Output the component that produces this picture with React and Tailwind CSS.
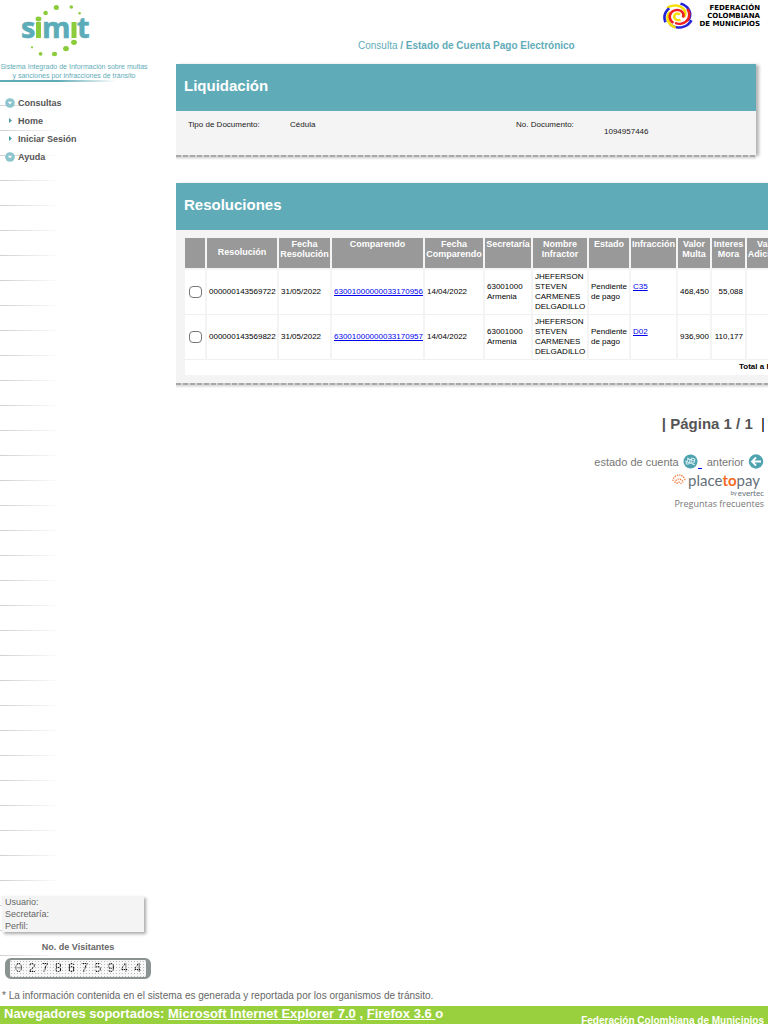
import React from "react";

const menuItems = [
  { label: "Consultas", group: true },
  { label: "Home" },
  { label: "Iniciar Sesión" },
  { label: "Ayuda", group: true },
];

const columns = [
  { label: "", width: "w-[21px]" },
  { label: "Resolución", width: "w-[72px]", middle: true },
  { label: "Fecha Resolución", width: "w-[53px]" },
  { label: "Comparendo", width: "w-[93px]" },
  { label: "Fecha Comparendo", width: "w-[60px]" },
  { label: "Secretaría", width: "w-[48px]" },
  { label: "Nombre Infractor", width: "w-[56px]" },
  { label: "Estado", width: "w-[42px]" },
  { label: "Infracción", width: "w-[47px]" },
  { label: "Valor Multa", width: "w-[34px]" },
  { label: "Interes Mora", width: "w-[35px]" },
  { label: "Valor Adicional", width: "w-[44px]" },
];

const rows = [
  {
    resolucion: "000000143569722",
    fecha: "31/05/2022",
    comparendo: "63001000000033170956",
    fechaComparendo: "14/04/2022",
    infraccion: "C35",
    multa: "468,450",
    mora: "55,088",
  },
  {
    resolucion: "000000143569822",
    fecha: "31/05/2022",
    comparendo: "63001000000033170957",
    fechaComparendo: "14/04/2022",
    infraccion: "D02",
    multa: "936,900",
    mora: "110,177",
  },
];

// swirl arms of the federation mark: start angle, sweep, outer and inner radius
const markArms = [
  { color: "#f5e000", start: -140, sweep: 150, from: 14, to: 6 },
  { color: "#2323d8", start: -80, sweep: 110, from: 14, to: 11 },
  { color: "#ee2020", start: -40, sweep: 150, from: 12, to: 8 },
  { color: "#2323d8", start: 20, sweep: 110, from: 14, to: 12 },
  { color: "#f5e000", start: 100, sweep: 110, from: 13, to: 9 },
  { color: "#2323d8", start: 150, sweep: 75, from: 14, to: 12 },
  { color: "#ee2020", start: 120, sweep: 260, from: 9, to: 5 },
  { color: "#f5e000", start: 60, sweep: 260, from: 5, to: 2 },
];

function armPoints({ start, sweep, from, to }) {
  const points = [];
  for (let i = 0; i <= 16; i++) {
    const angle = ((start + (sweep * i) / 16) * Math.PI) / 180;
    const r = from + ((to - from) * i) / 16;
    points.push(`${(r * Math.cos(angle)).toFixed(2)},${(r * Math.sin(angle)).toFixed(2)}`);
  }
  return points.join(" ");
}

function SimitLogo() {
  return (
    <svg width="76" height="54" viewBox="0 0 76 54" role="img" aria-label="simit">
      <g
        className="font-['Open_Sans','Noto_Sans',sans-serif] text-[29px] font-bold"
        fill="#5bacb8"
        stroke="#5bacb8"
        strokeWidth="0.600"
      >
        <text x="1" y="35">s</text>
        <text x="22" y="35">m</text>
        <text x="57" y="35">t</text>
      </g>
      <path fill="#8ccb3c" d="M16 19h5V35h-5zM51.500 19h5V35h-5z" />
      <g fill="#8ccb3c">
        <ellipse cx="18.500" cy="16" rx="2.900" ry="2.400" />
        <ellipse cx="25.600" cy="10" rx="2.300" ry="2.200" />
        <ellipse cx="36.300" cy="4.400" rx="2.600" ry="2.500" />
        <circle cx="51.300" cy="4" r="1.800" />
        <circle cx="59.600" cy="10.300" r="1.200" />
        <ellipse cx="54" cy="39.300" rx="2.900" ry="2.600" />
        <ellipse cx="46" cy="45.600" rx="2.900" ry="2.600" />
        <ellipse cx="34.500" cy="51" rx="2.600" ry="2.200" />
        <circle cx="20.600" cy="50.800" r="1.900" />
        <circle cx="12" cy="44.300" r="1.100" />
      </g>
    </svg>
  );
}

function FederationMark() {
  return (
    <svg width="32" height="28" viewBox="0 0 32 28" aria-hidden="true">
      <g transform="translate(16 14) scale(1.020 0.900)" fill="none">
        {markArms.map((arm, i) => (
          <polyline key={i} points={armPoints(arm)} stroke={arm.color} strokeWidth="2.600" />
        ))}
      </g>
    </svg>
  );
}

function GroupIcon() {
  return (
    <svg width="10" height="10" viewBox="0 0 10 10" aria-hidden="true">
      <circle cx="5" cy="5" r="4.800" fill="#8cc5cd" />
      <path d="M2.800 3.700H7.200L5 6.400Z" fill="#fff" />
    </svg>
  );
}

function Panel({ title, children, className = "" }) {
  return (
    <section className={className}>
      <div className="bg-[#f4f4f4] shadow-[3px_1px_3px_#b5b5b5]">
        <h2 className="flex h-[47px] items-center bg-[#5facb8] px-2 pb-[2px] text-[15px] font-bold text-white">
          {title}
        </h2>
        {children}
      </div>
      <div className="relative h-[2px] bg-[repeating-linear-gradient(90deg,#a8a8a8_0_5px,#d5d5d5_5px_7px)]" />
      <div className="relative h-[3px] bg-linear-to-b from-[#d5d5d5] to-white" />
    </section>
  );
}

function Sidebar() {
  return (
    <aside className="flex w-[152px] shrink-0 flex-col">
      <div className="flex flex-col bg-white">
        <div className="pt-[3px] pl-5">
          <SimitLogo />
        </div>
        <p className="mt-[5px] h-[18px] pr-1 text-center text-[7px] leading-[9px] whitespace-nowrap text-[#5facb8]">
          Sistema Integrado de Información sobre multas
          <br />y sanciones por infracciones de tránsito
        </p>
        <div className="h-[2px] w-[116px] bg-linear-to-r from-[#5facb8] from-50% to-white" />
      </div>
      <nav className="pt-[13px]">
        <ul>
          {menuItems.map((item) => (
            <li key={item.label} className="flex h-[18px] items-center">
              <span className="flex w-[18px] pb-[3px] pl-[5px]">
                {item.group ? (
                  <GroupIcon />
                ) : (
                  <svg width="10" height="8" viewBox="0 0 10 8" aria-hidden="true">
                    <path d="M4 1V6L7 3.500Z" fill="#4b9ca8" />
                  </svg>
                )}
              </span>
              <a href="#" className="text-[9px] font-bold text-[#555]">
                {item.label}
              </a>
            </li>
          ))}
        </ul>
      </nav>
      <div className="mt-auto w-[144px] pl-[2px]">
        <div className="bg-[#f4f4f4] pl-[3px] text-[9px] leading-[12px] text-[#666] shadow-[2px_2px_3px_#aaa]">
          <p>Usuario:</p>
          <p>Secretaría:</p>
          <p>Perfil:</p>
        </div>
      </div>
      <p className="mt-2 pl-1 text-center text-[9px] leading-[14px] font-bold text-[#666]">
        No. de Visitantes
      </p>
      <div className="mt-1 mb-px ml-[5px] flex h-[21px] w-[146px] items-center justify-around rounded-[6px] border-x-[5px] border-y-2 border-[#8a9292] bg-[#f8f8f8] bg-[radial-gradient(#bbb_1px,transparent_1px)] bg-size-[3px_3px] px-[2px] font-['Liberation_Mono',monospace] text-[13px]">
        {"0278675944".split("").map((digit, i) => (
          <span
            key={i}
            className="bg-[repeating-linear-gradient(90deg,#111_0_1px,#aaa_1px_2px)] bg-clip-text text-transparent"
          >
            {digit}
          </span>
        ))}
      </div>
    </aside>
  );
}

function ResolutionsTable() {
  return (
    <table className="w-[605px] table-fixed border-collapse text-[8px] leading-[10px] text-black">
      <thead>
        <tr className="h-[31px] bg-[#999]">
          {columns.map((col, i) => (
            <th
              key={i}
              className={`${col.width} border-r-2 border-b-2 border-[#f4f4f4] px-0 text-[9px] font-bold text-white ${
                col.middle ? "pb-[3px] align-middle" : "pt-px align-top"
              }`}
            >
              {col.label}
            </th>
          ))}
        </tr>
      </thead>
      <tbody>
        {rows.map((row) => (
          <tr
            key={row.resolucion}
            className="h-[45px] border-b border-[#f0f0f0] bg-white *:border-r-2 *:border-[#f4f4f4] *:p-[2px]"
          >
            <td className="text-center">
              <input
                type="checkbox"
                aria-label={`Seleccionar resolución ${row.resolucion}`}
                className="mx-auto block h-[12px] w-[13px] appearance-none rounded-[4px] border border-[#777] bg-white"
              />
            </td>
            <td>{row.resolucion}</td>
            <td>{row.fecha}</td>
            <td>
              <a href="#" className="text-[#0000ee] underline">
                {row.comparendo}
              </a>
            </td>
            <td>{row.fechaComparendo}</td>
            <td>63001000 Armenia</td>
            <td>JHEFERSON STEVEN CARMENES DELGADILLO</td>
            <td>Pendiente de pago</td>
            <td>
              <a href="#" className="block pb-[10px] text-[#0000ee] underline">
                {row.infraccion}
              </a>
            </td>
            <td className="text-right">{row.multa}</td>
            <td className="text-right">{row.mora}</td>
            <td />
          </tr>
        ))}
        <tr className="h-[15px] bg-white">
          <td colSpan={12} className="pl-[554px] font-bold whitespace-nowrap">
            Total a Pagar:
          </td>
        </tr>
      </tbody>
    </table>
  );
}

function PlaceToPay() {
  return (
    <a href="#" className="flex flex-col items-end pr-1" aria-label="placetopay by evertec">
      <span className="flex items-center gap-[2px] pr-1 font-['Lato',sans-serif] text-[15px] leading-[12px] text-[#66707a]">
        <svg width="14" height="12" viewBox="0 0 14 12" aria-hidden="true">
          <g fill="none" stroke="#f47b3c" strokeWidth="1.200" strokeDasharray="1.500 0.800">
            <path d="M1 7A6 6 0 0 1 13 7" />
            <path d="M3 9A4 4 0 1 1 11 9" />
            <path d="M5 10A2 2 0 1 1 9 10" />
          </g>
        </svg>
        <span>
          place<b className="text-[#f26a21]">to</b>pay
        </span>
      </span>
      <span className="mt-[3px] flex items-center gap-px font-['Lato',sans-serif] text-[8px] leading-[8px] text-[#66707a]">
        <small className="text-[6px]">by</small>evertec
      </span>
    </a>
  );
}

function Actions() {
  return (
    <div className="flex flex-col items-end text-[#777]">
      <p className="mt-[26px] pr-[3px] text-[15px] leading-[20px] font-bold whitespace-pre text-[#555]">
        | Página 1 / 1{"  "}
        <span className="font-normal text-black">|</span>
      </p>
      <div className="mt-5 flex items-center gap-[5px] pr-1 text-[11px] leading-[16px]">
        <a href="#" className="flex items-center">
          <span className="pr-1">estado de cuenta</span>
          <svg width="15" height="15" viewBox="0 0 15 15" aria-hidden="true">
            <circle cx="7.500" cy="7.500" r="7" fill="#4fa3b0" />
            <path
              d="M3 10L5 5L7 6L6 10ZM8 9L8.500 4L12 5L11 9ZM2 7L12 11M4 4L11 7"
              fill="none"
              stroke="#d8eef1"
              strokeWidth="1"
            />
          </svg>
          <span className="h-[15px] w-[4px] border-b border-[#0000ee]" />
        </a>
        <a href="#" className="flex items-center gap-1">
          anterior
          <svg width="16" height="15" viewBox="0 0 16 15" aria-hidden="true">
            <circle cx="8" cy="7.500" r="7.200" fill="#4fa3b0" />
            <path d="M13 7.500H4M8 3.500L4 7.500L8 11.500" fill="none" stroke="#fff" strokeWidth="1.800" />
          </svg>
        </a>
      </div>
      <div className="mt-1">
        <PlaceToPay />
      </div>
      <a href="#" className="pr-1 font-['Open_Sans','Noto_Sans',sans-serif] text-[9px] leading-[14px]">
        Preguntas frecuentes
      </a>
    </div>
  );
}

function App() {
  return (
    <div className="flex h-screen flex-col overflow-hidden bg-white font-['Liberation_Sans',Arial,sans-serif]">
      <div className="flex min-h-0 flex-1 bg-[linear-gradient(#d0d0d0_1px,transparent_1px)] bg-size-[100%_25px] bg-position-[0_5px]">
        <div className="flex min-w-0 flex-1 bg-linear-to-r from-transparent to-white to-[60px]">
          <Sidebar />
          <main className="min-w-0 flex-1 overflow-hidden pl-6">
            <header className="flex h-[64px] items-start justify-between">
              <p className="flex-1 self-end pb-3 pl-[182px] text-[10px] leading-[12px] font-bold whitespace-nowrap text-[#5facb8]">
                <span className="font-normal">Consulta</span> / Estado de Cuenta Pago Electrónico
              </p>
              <div className="flex shrink-0 items-start gap-[5px] pt-[2px] pr-2">
                <FederationMark />
                <p className="pt-[2px] text-right font-['DejaVu_Sans',sans-serif] text-[7px] leading-[8px] font-bold text-black">
                  FEDERACIÓN
                  <br />
                  COLOMBIANA
                  <br />
                  DE MUNICIPIOS
                </p>
              </div>
            </header>
            <Panel title="Liquidación" className="mr-3">
              <dl className="flex h-[44px] items-start pt-2 pl-3 text-[8px] leading-[12px] text-[#222]">
                <dt className="w-[102px]">Tipo de Documento:</dt>
                <dd className="w-[226px]">Cédula</dd>
                <dt className="w-[88px]">No. Documento:</dt>
                <dd className="pt-[7px]">1094957446</dd>
              </dl>
            </Panel>
            <Panel title="Resoluciones" className="mt-[23px] w-[640px]">
              <div className="pt-2 pb-2 pl-[9px]">
                <ResolutionsTable />
              </div>
            </Panel>
            <Actions />
          </main>
        </div>
      </div>
      <p className="h-[26px] shrink-0 pt-[10px] pl-[2px] text-[10px] leading-[12px] text-[#666]">
        * La información contenida en el sistema es generada y reportada por los organismos de tránsito.
      </p>
      <footer className="flex h-[18px] shrink-0 justify-between bg-[#98d03e] pr-1 pl-1 font-bold text-white">
        <p className="text-[13px] leading-[16px] whitespace-nowrap">
          Navegadores soportados:{" "}
          <a href="#" className="underline">
            Microsoft Internet Explorer 7.0
          </a>{" "}
          ,{" "}
          <a href="#" className="underline">
            Firefox 3.6{" "}
          </a>
          o
        </p>
        <p className="pt-[9px] text-[10px] leading-[12px] whitespace-nowrap">
          Federación Colombiana de Municipios
        </p>
      </footer>
    </div>
  );
}

export default App;
